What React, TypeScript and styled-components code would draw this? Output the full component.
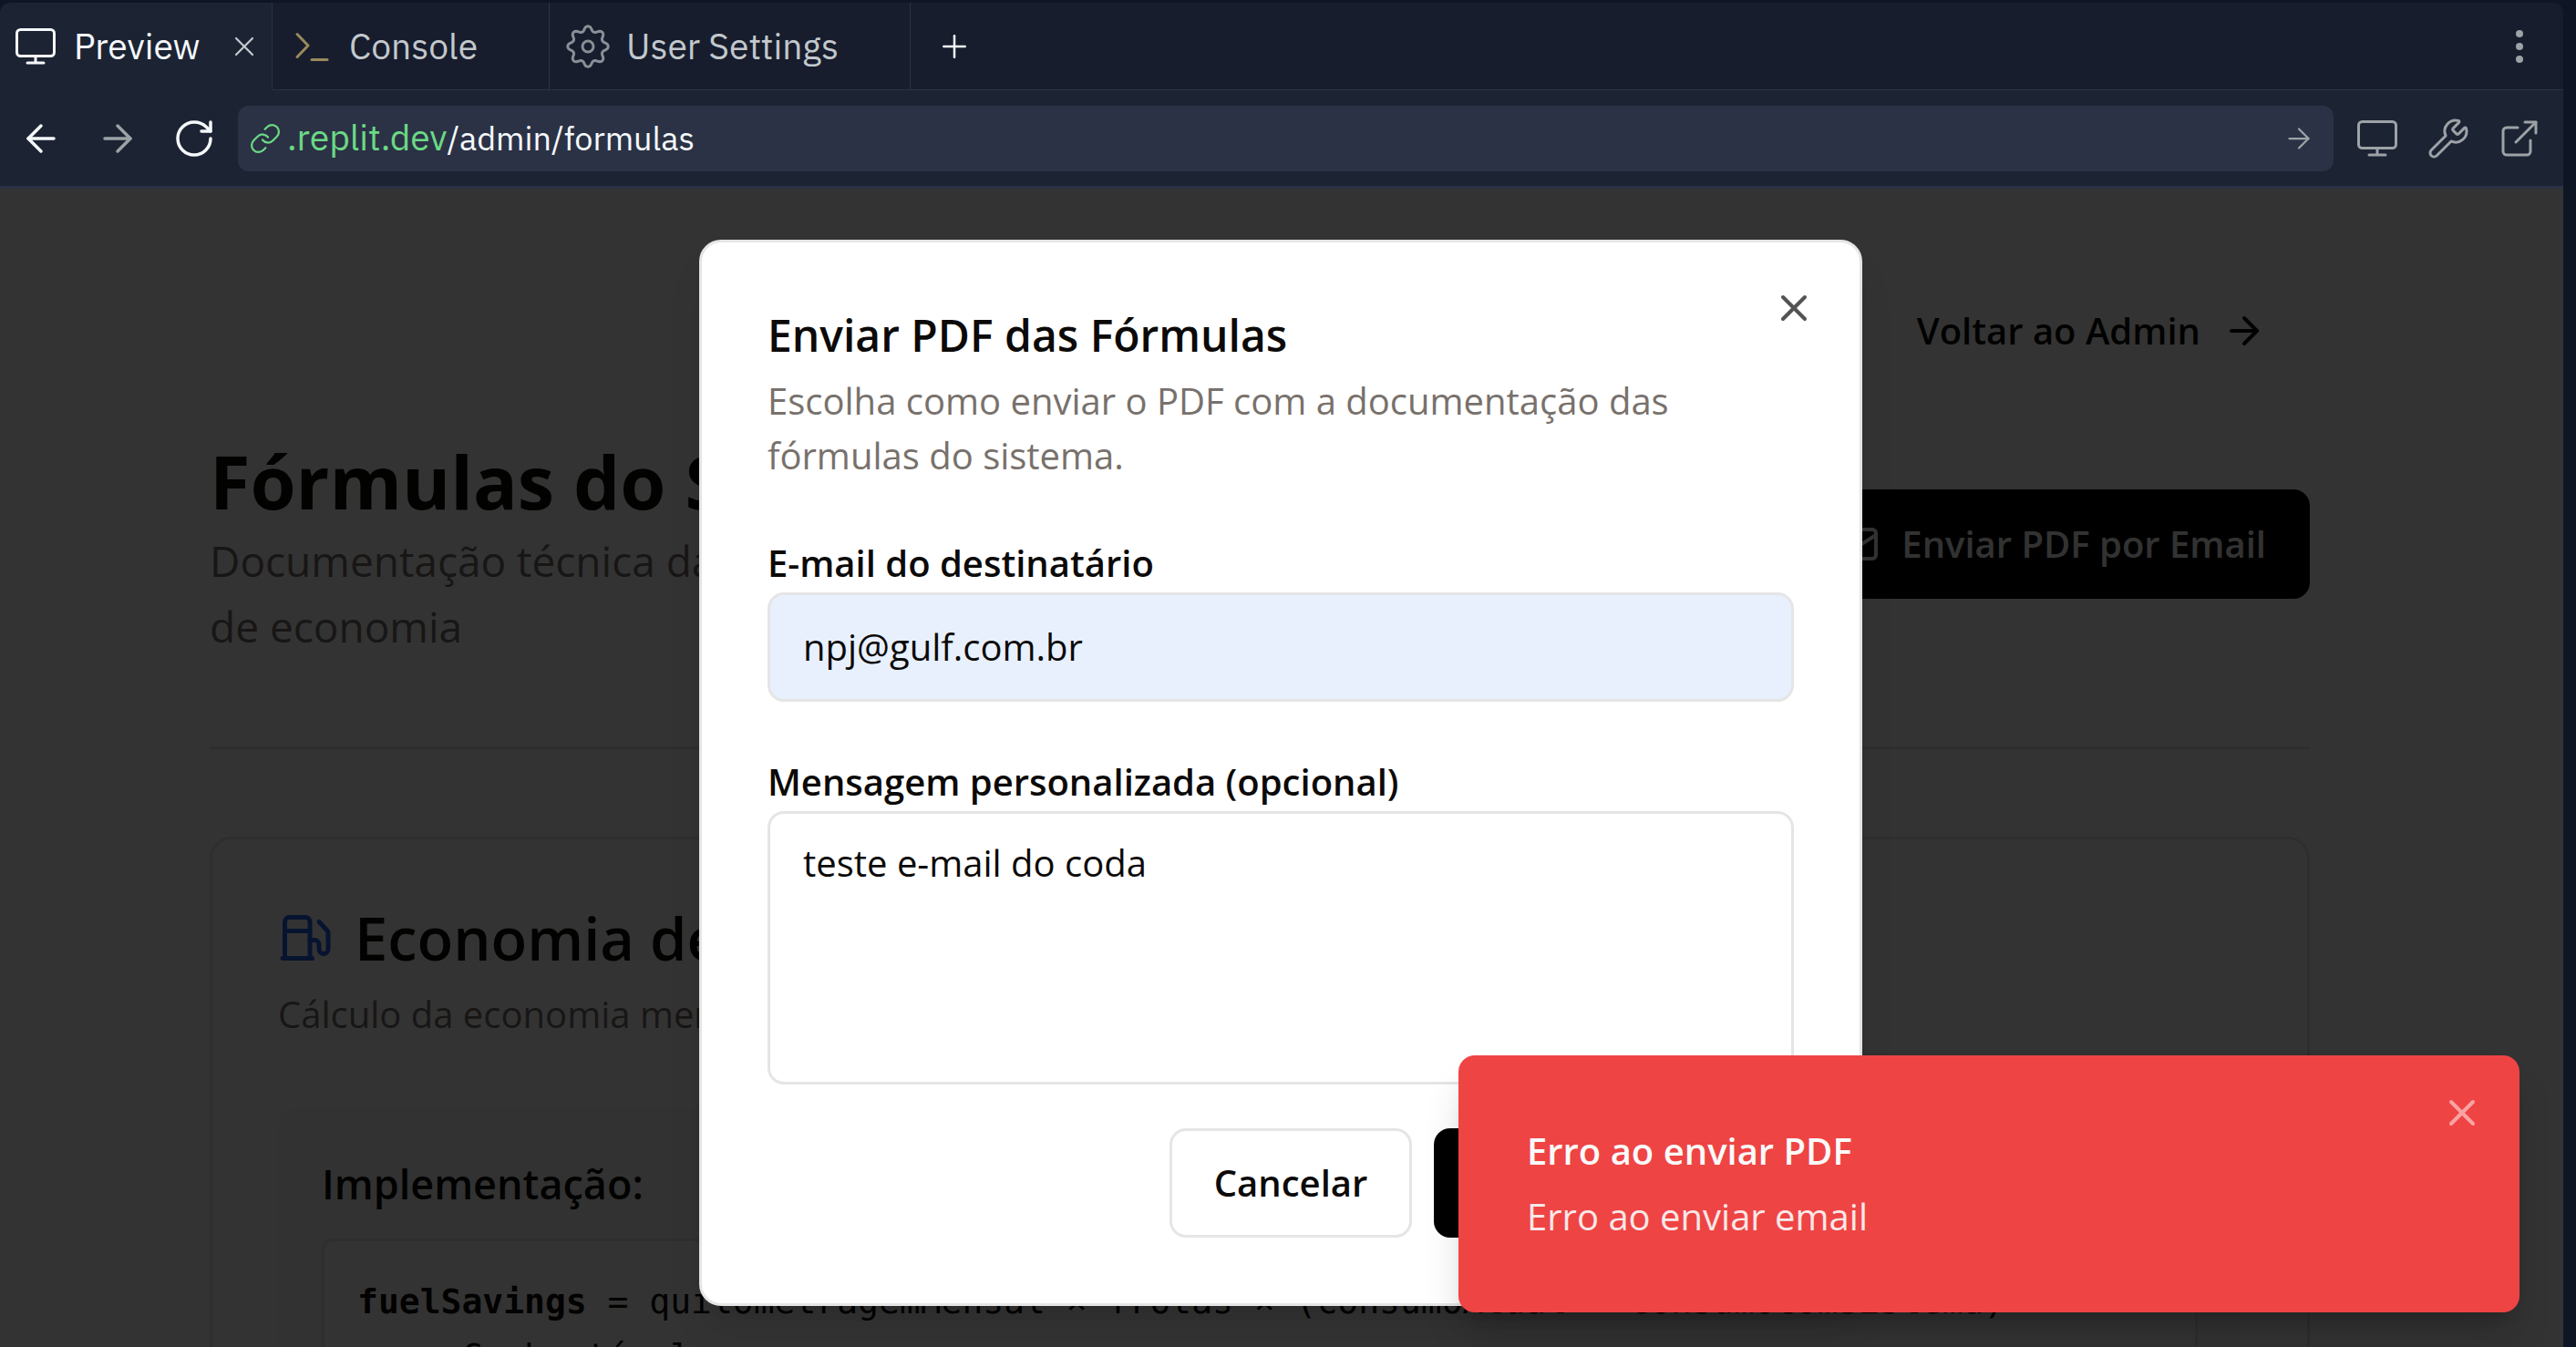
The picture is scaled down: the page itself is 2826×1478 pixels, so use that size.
import React from 'react';
import styled, { createGlobalStyle } from 'styled-components';
import { ArrowLeft, ArrowRight, ExternalLink, Fuel, Link, Mail, Plus, RotateCw, Wrench, X } from 'lucide-react';

const uiFont = '"IBM Plex Sans", Inter, sans-serif';
const pageFont = '"Segoe UI", "Open Sans", "Noto Sans", sans-serif';
const codeFont = 'Consolas, "DejaVu Sans Mono", monospace';

const GlobalStyle = createGlobalStyle`
  *, *::before, *::after { box-sizing: border-box; }
  body { margin: 0; background: #0e1525; overflow: hidden; }
  h1, h2, h3, p, pre { margin: 0; }
  button, input, textarea { font: inherit; margin: 0; }
  svg { display: block; flex: none; }
`;

/* ---------- workspace chrome ---------- */

const Shell = styled.div`
  height: 100vh;
  padding: 3px 14px 0 0;
  overflow: hidden;
  background: #0e1525;
  font-family: ${uiFont};
`;

const Pane = styled.div`
  display: flex;
  flex-direction: column;
  border-radius: 12px 12px 0 0;
  overflow: hidden;
  background: #1c2333;
`;

const TabBar = styled.div`
  display: flex;
  height: 96px;
  background: #171d2d;
`;

const Tab = styled.div<{ $active?: boolean; $width: number }>`
  display: flex;
  align-items: center;
  justify-content: space-between;
  width: ${(p) => p.$width}px;
  padding: 0 12px 0 ${(p) => (p.$active ? 15 : 18)}px;
  border-right: 1px solid #2b3245;
  border-bottom: 1px solid ${(p) => (p.$active ? '#1c2333' : '#2b3245')};
  background: ${(p) => (p.$active ? '#1c2333' : 'transparent')};
`;

const TabButton = styled.button<{ $active?: boolean }>`
  display: flex;
  align-items: center;
  gap: 18px;
  padding: 0;
  border: 0;
  background: none;
  color: ${(p) => (p.$active ? '#f5f9fc' : '#c2c8cc')};
  font-size: 39px;
  line-height: 48px;
  white-space: nowrap;
`;

const TabBarRest = styled.div`
  flex: 1;
  display: flex;
  align-items: center;
  justify-content: space-between;
  padding: 0 24px 0 28px;
  border-bottom: 1px solid #2b3245;
`;

const IconButton = styled.button<{ $color?: string }>`
  display: flex;
  padding: 0;
  border: 0;
  background: none;
  color: ${(p) => p.$color ?? '#9da2a6'};
`;

const Toolbar = styled.div`
  display: flex;
  align-items: center;
  gap: 24px;
  height: 108px;
  padding: 0 24px 0 21px;
  border-bottom: 3px solid #2b3245;
`;

const NavGroup = styled.div`
  display: flex;
  gap: 36px;
`;

const ToolGroup = styled.div`
  display: flex;
  gap: 30px;
`;

const AddressBar = styled.div`
  flex: 1;
  display: flex;
  align-items: center;
  justify-content: space-between;
  height: 72px;
  padding: 0 20px 0 12px;
  border-radius: 12px;
  background: #2b3245;
`;

const Address = styled.a`
  display: flex;
  align-items: center;
  gap: 6px;
  color: #f5f9fc;
  font-size: 36px;
  line-height: 48px;
  text-decoration: none;
`;

const Host = styled.span`
  color: #6bd985;
  font-size: 39px;
`;

/* ---------- previewed page ---------- */

const Stage = styled.div`
  position: relative;
  height: calc(100vh - 197px);
  overflow: hidden;
  background: #fff;
  color: #0c0a09;
  font-family: ${pageFont};
`;

const PageScroll = styled.div`
  padding-right: 48px;
`;

const Page = styled.main`
  width: 2304px;
  max-width: calc(100% - 96px);
  margin: 0 auto;
  padding-top: 96px;
`;

const BackRow = styled.div`
  display: flex;
  justify-content: flex-end;
  margin-bottom: 48px;
`;

const BackLink = styled.a`
  display: flex;
  align-items: center;
  gap: 24px;
  height: 120px;
  padding: 0 48px;
  color: #0c0a09;
  font-size: 40px;
  font-weight: 600;
  line-height: 60px;
  text-decoration: none;
`;

const HeadingRow = styled.div`
  display: flex;
  align-items: center;
  justify-content: space-between;
  padding-bottom: 96px;
  border-bottom: 3px solid #e7e5e4;
`;

const PageTitle = styled.h1`
  padding-top: 6px;
  font-size: 81px;
  font-weight: 700;
  line-height: 102px;
`;

const Lead = styled.p`
  color: #78716c;
  font-size: 46px;
  line-height: 72px;
`;

const Button = styled.button<{ $outline?: boolean; $minWidth?: number }>`
  display: flex;
  align-items: center;
  justify-content: center;
  gap: 24px;
  height: 120px;
  min-width: ${(p) => p.$minWidth ?? 0}px;
  padding: 0 ${(p) => (p.$outline ? 45 : 48)}px;
  border: ${(p) => (p.$outline ? '3px solid #e7e5e4' : '0')};
  border-radius: 18px;
  background: ${(p) => (p.$outline ? '#fff' : '#000')};
  color: ${(p) => (p.$outline ? '#0c0a09' : '#fafaf9')};
  font-size: 40px;
  font-weight: 600;
  line-height: 60px;
  white-space: nowrap;
`;

const Card = styled.section`
  display: flex;
  flex-direction: column;
  gap: 72px;
  margin-top: 96px;
  padding: 72px;
  border: 3px solid #e7e5e4;
  border-radius: 24px;
`;

const CardHeader = styled.div`
  display: flex;
  flex-direction: column;
  gap: 18px;
`;

const CardTitle = styled.h2`
  display: flex;
  align-items: center;
  gap: 24px;
  font-size: 65px;
  font-weight: 600;
  line-height: 72px;
`;

const Muted = styled.p`
  color: #78716c;
  font-size: 40px;
  line-height: 60px;
`;

const Implementation = styled.div`
  display: flex;
  flex-direction: column;
  gap: 24px;
  padding: 48px;
  border-radius: 24px;
  background: #f8f8f7;
`;

const SectionTitle = styled.h3`
  font-size: 45px;
  font-weight: 600;
  line-height: 72px;
`;

const Code = styled.pre`
  padding: 36px;
  border: 3px solid #e7e5e4;
  border-radius: 12px;
  background: #fff;
  font-family: ${codeFont};
  font-size: 38px;
  line-height: 60px;
  white-space: pre-wrap;
`;

/* ---------- modal and toast ---------- */

const Overlay = styled.div`
  position: absolute;
  inset: 0;
  display: flex;
  align-items: center;
  justify-content: center;
  padding-right: 2px;
  background: rgba(0, 0, 0, 0.8);
`;

const Dialog = styled.div`
  position: relative;
  display: flex;
  flex-direction: column;
  gap: 48px;
  width: 1276px;
  max-width: 100%;
  padding: 72px;
  border: 3px solid #e5e5e5;
  border-radius: 24px;
  background: #fff;
  box-shadow: 0 30px 45px -9px rgba(0, 0, 0, 0.1), 0 12px 18px -12px rgba(0, 0, 0, 0.1);
`;

const DialogHeader = styled.div`
  display: flex;
  flex-direction: column;
  gap: 18px;
`;

const DialogTitle = styled.h2`
  padding-top: 6px;
  font-size: 48px;
  font-weight: 600;
  line-height: 48px;
`;

const DialogClose = styled(IconButton)`
  position: absolute;
  top: 48px;
  right: 48px;
`;

const Form = styled.form`
  display: flex;
  flex-direction: column;
  gap: 48px;
`;

const Field = styled.div`
  display: flex;
  flex-direction: column;
`;

const Label = styled.label`
  padding-top: 8px;
  font-size: 40px;
  font-weight: 600;
  line-height: 64px;
`;

const Input = styled.input`
  height: 120px;
  padding: 0 36px;
  border: 3px solid #e5e5e5;
  border-radius: 18px;
  background: #e8f0fe;
  color: #0c0a09;
  font-size: 40px;
  outline: 0;
`;

const TextArea = styled.textarea`
  height: 300px;
  padding: 24px 36px;
  border: 3px solid #e5e5e5;
  border-radius: 18px;
  background: #fff;
  color: #0c0a09;
  font-size: 40px;
  line-height: 60px;
  resize: none;
  outline: 0;
`;

const Actions = styled.div`
  display: flex;
  justify-content: flex-end;
  gap: 24px;
`;

const Toast = styled.div`
  position: absolute;
  right: 48px;
  bottom: 48px;
  display: flex;
  flex-direction: column;
  gap: 12px;
  width: 1164px;
  max-width: calc(100% - 96px);
  padding: 75px;
  border-radius: 18px;
  background: #ef4444;
  color: #fafafa;
  font-size: 40px;
  line-height: 60px;
  box-shadow: 0 30px 45px -9px rgba(0, 0, 0, 0.2), 0 12px 18px -12px rgba(0, 0, 0, 0.2);
`;

const ToastTitle = styled.div`
  font-weight: 600;
`;

const ToastText = styled.div`
  opacity: 0.9;
`;

const ToastClose = styled(IconButton)`
  position: absolute;
  top: 39px;
  right: 39px;
`;

/* ---------- drawn icons ---------- */

const MonitorIcon = () => (
  <svg width="48" height="48" viewBox="0 0 48 48" fill="none" stroke="currentColor" strokeWidth="3" strokeLinecap="round">
    <rect x="3.5" y="5.5" width="41" height="29" rx="4" />
    <path d="M24 35v7M15 42h18" />
  </svg>
);

const PromptIcon = () => (
  <svg width="48" height="48" viewBox="0 0 48 48" fill="none" stroke="#998a5c" strokeWidth="3" strokeLinecap="round" strokeLinejoin="round">
    <path d="M9 10.5l12 12.5-12 12.5" />
    <path d="M25 38.5h17" />
  </svg>
);

const gearPath =
  Array.from({ length: 97 }, (_, i) => {
    const a = (i / 96) * Math.PI * 2;
    const wave = Math.cos(8 * a);
    const r = 19.6 + 2.6 * Math.sign(wave) * Math.pow(Math.abs(wave), 0.7);
    return `${i ? 'L' : 'M'}${(24 + r * Math.cos(a)).toFixed(2)} ${(24 + r * Math.sin(a)).toFixed(2)}`;
  }).join('') + 'Z';

const GearIcon = () => (
  <svg width="48" height="48" viewBox="0 0 48 48" fill="none" stroke="#8a8e96" strokeWidth="3" strokeLinejoin="round">
    <path d={gearPath} />
    <circle cx="24" cy="24" r="6" />
  </svg>
);

const DotsIcon = () => (
  <svg width="48" height="48" viewBox="0 0 48 48" fill="currentColor">
    <circle cx="24" cy="10" r="4" />
    <circle cx="24" cy="24" r="4" />
    <circle cx="24" cy="38" r="4" />
  </svg>
);

export default function App() {
  return (
    <Shell>
      <GlobalStyle />
      <Pane>
        <TabBar>
          <Tab $active $width={299}>
            <TabButton $active>
              <MonitorIcon />
              Preview
            </TabButton>
            <IconButton $color="#c2c8cc" aria-label="Close tab">
              <X size={36} strokeWidth={1.5} />
            </IconButton>
          </Tab>
          <Tab $width={304}>
            <TabButton>
              <PromptIcon />
              Console
            </TabButton>
          </Tab>
          <Tab $width={396}>
            <TabButton>
              <GearIcon />
              User Settings
            </TabButton>
          </Tab>
          <TabBarRest>
            <IconButton $color="#f5f9fc" aria-label="New tab">
              <Plus size={40} strokeWidth={1.5} />
            </IconButton>
            <IconButton aria-label="More">
              <DotsIcon />
            </IconButton>
          </TabBarRest>
        </TabBar>

        <Toolbar>
          <NavGroup>
            <IconButton $color="#f5f9fc" aria-label="Back">
              <ArrowLeft size={48} strokeWidth={1.75} />
            </IconButton>
            <IconButton aria-label="Forward">
              <ArrowRight size={48} strokeWidth={1.75} />
            </IconButton>
            <IconButton $color="#f5f9fc" aria-label="Reload">
              <RotateCw size={48} strokeWidth={1.75} />
            </IconButton>
          </NavGroup>
          <AddressBar>
            <Address href="#">
              <Link size={36} strokeWidth={1.5} color="#6bd985" />
              <span>
                <Host>.replit.dev</Host>/admin/formulas
              </span>
            </Address>
            <IconButton aria-label="Go">
              <ArrowRight size={36} strokeWidth={1.5} />
            </IconButton>
          </AddressBar>
          <ToolGroup>
            <IconButton aria-label="Device size">
              <MonitorIcon />
            </IconButton>
            <IconButton aria-label="Developer tools">
              <Wrench size={48} strokeWidth={1.5} />
            </IconButton>
            <IconButton aria-label="Open in new window">
              <ExternalLink size={48} strokeWidth={1.5} />
            </IconButton>
          </ToolGroup>
        </Toolbar>

        <Stage>
          <PageScroll>
            <Page>
              <BackRow>
                <BackLink href="#">
                  Voltar ao Admin
                  <ArrowRight size={48} />
                </BackLink>
              </BackRow>
              <HeadingRow>
                <div>
                  <PageTitle>Fórmulas do Sistema</PageTitle>
                  <Lead>
                    Documentação técnica das fórmulas utilizadas nos cálculos
                    <br />
                    de economia
                  </Lead>
                </div>
                <Button>
                  <Mail size={48} />
                  Enviar PDF por Email
                </Button>
              </HeadingRow>
              <Card>
                <CardHeader>
                  <CardTitle>
                    <Fuel size={60} color="#2563eb" />
                    Economia de Combustível
                  </CardTitle>
                  <Muted>Cálculo da economia mensal em combustível</Muted>
                </CardHeader>
                <Implementation>
                  <SectionTitle>Implementação:</SectionTitle>
                  <Code>
                    <strong>fuelSavings</strong> = quilometragemMensal × frotas × (consumoAtual - consumoComSistema) × preçoCombustível
                  </Code>
                </Implementation>
              </Card>
            </Page>
          </PageScroll>

          <Overlay>
            <Dialog role="dialog" aria-labelledby="dialog-title">
              <DialogHeader>
                <DialogTitle id="dialog-title">Enviar PDF das Fórmulas</DialogTitle>
                <Muted>
                  Escolha como enviar o PDF com a documentação das
                  <br />
                  fórmulas do sistema.
                </Muted>
              </DialogHeader>
              <Form>
                <Field>
                  <Label htmlFor="email">E-mail do destinatário</Label>
                  <Input id="email" type="email" defaultValue="npj@gulf.com.br" />
                </Field>
                <Field>
                  <Label htmlFor="message">Mensagem personalizada (opcional)</Label>
                  <TextArea id="message" defaultValue="teste e-mail do coda" />
                </Field>
                <Actions>
                  <Button type="button" $outline $minWidth={266}>
                    Cancelar
                  </Button>
                  <Button type="button" $minWidth={395}>
                    <Mail size={48} />
                    Enviar PDF
                  </Button>
                </Actions>
              </Form>
              <DialogClose $color="#545352" aria-label="Fechar">
                <X size={48} />
              </DialogClose>
            </Dialog>
          </Overlay>

          <Toast role="alert">
            <ToastTitle>Erro ao enviar PDF</ToastTitle>
            <ToastText>Erro ao enviar email</ToastText>
            <ToastClose $color="#f9a3a3" aria-label="Dispensar">
              <X size={48} />
            </ToastClose>
          </Toast>
        </Stage>
      </Pane>
    </Shell>
  );
}
